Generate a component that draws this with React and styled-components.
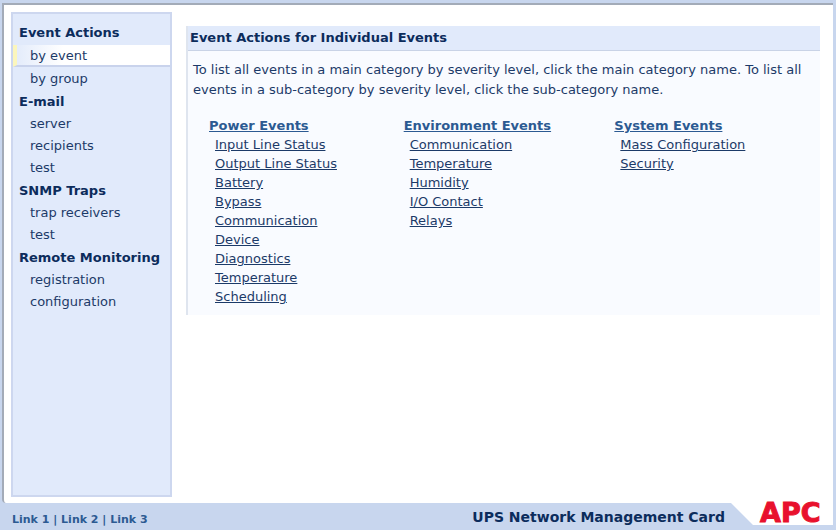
import React, { useState } from 'react';
import styled, { createGlobalStyle } from 'styled-components';

const navy = '#0c2c5c';
const textBlue = '#1c3a68';
const linkBlue = '#2c5a92';
const frameBlue = '#c8d6ee';
const panelBlue = '#e1eafb';

const GlobalStyle = createGlobalStyle`
    * {
        box-sizing: border-box;
    }
    body {
        margin: 0;
        font-family: Verdana, 'DejaVu Sans', sans-serif;
        font-size: 13px;
        color: ${textBlue};
        background: ${frameBlue};
    }
    a {
        color: inherit;
    }
`;

const Page = styled.div`
    min-height: 100vh;
    display: flex;
    flex-direction: column;
    padding: 3px 3px 0 2px;
`;

const Body = styled.div`
    flex: 1;
    display: flex;
    align-items: stretch;
    gap: 14px;
    padding: 7px 13px 6px 7px;
    background: #fff;
    border-top: 2px solid #a3abb8;
    border-left: 2px solid #a3abb8;
    border-bottom-left-radius: 4px;
`;

const Sidebar = styled.nav`
    flex: none;
    width: 161px;
    padding-top: 7px;
    background: ${panelBlue};
    border: 2px solid #cdd7ef;
`;

const NavTitle = styled.h2`
    margin: 0;
    padding-left: 6px;
    font-size: 13px;
    line-height: 23px;
    color: ${navy};
`;

const NavList = styled.ul`
    list-style: none;
    margin: 0;
    padding: 0;
`;

const NavItem = styled.li`
    height: 22px;
    margin: ${props => props.$active ? '1px 0' : '0'};
    background: ${props => props.$active ? 'linear-gradient(to right, #e4ecfb, #fff 30%)' : 'none'};
    border-bottom: ${props => props.$active ? '2px solid #c9d3ec' : 'none'};
    border-left: 4px solid ${props => props.$active ? '#fbf6bd' : 'transparent'};
    a {
        display: block;
        padding-left: 13px;
        line-height: 22px;
        text-decoration: none;
    }
`;

const Main = styled.main`
    flex: 1;
    min-width: 0;
    padding-top: 14px;
`;

const Panel = styled.section`
    padding-bottom: 9px;
    background: #f9fbff;
    border-left: 2px solid #dfe5ef;
`;

const PanelTitle = styled.h1`
    margin: 0;
    padding-left: 2px;
    font-size: 13px;
    line-height: 24px;
    color: ${navy};
    background: ${panelBlue};
    border-bottom: 1px solid #c9d3e6;
`;

const Intro = styled.p`
    margin: 0;
    padding: 9px 12px 17px 5px;
    line-height: 20px;
`;

const Columns = styled.div`
    display: grid;
    grid-template-columns: 195fr 211fr 206fr;
    padding-left: 21px;
`;

const Category = styled.h3`
    margin: 0;
    font-size: 13px;
    line-height: 18px;
    color: ${linkBlue};
`;

const EventList = styled.ul`
    list-style: none;
    margin: 0;
    padding: 0 0 0 6px;
    line-height: 19px;
`;

const Footer = styled.footer`
    display: flex;
    justify-content: space-between;
    align-items: stretch;
    height: 27px;
`;

const FooterLinks = styled.div`
    padding: 8px 0 0 10px;
    font-size: 11px;
    font-weight: bold;
    line-height: 17px;
    color: ${linkBlue};
    a {
        text-decoration: none;
    }
`;

const Brand = styled.div`
    display: flex;
`;

const Product = styled.div`
    padding-top: 3px;
    font-size: 14px;
    font-weight: bold;
    line-height: 22px;
    color: ${navy};
`;

const Logo = styled.svg`
    display: block;
    width: 108px;
    height: 27px;
    overflow: visible;
`;

const sections = [
    { title: 'Event Actions', items: ['by event', 'by group'] },
    { title: 'E-mail', items: ['server', 'recipients', 'test'] },
    { title: 'SNMP Traps', items: ['trap receivers', 'test'] },
    { title: 'Remote Monitoring', items: ['registration', 'configuration'] }
];

const categories = [
    {
        title: 'Power Events',
        events: ['Input Line Status', 'Output Line Status', 'Battery', 'Bypass', 'Communication', 'Device', 'Diagnostics', 'Temperature', 'Scheduling']
    },
    {
        title: 'Environment Events',
        events: ['Communication', 'Temperature', 'Humidity', 'I/O Contact', 'Relays']
    },
    { title: 'System Events', events: ['Mass Configuration', 'Security'] }
];

const App = () => {
    const [active, setActive] = useState('Event Actions/by event');

    return (
        <Page>
            <GlobalStyle />
            <Body>
                <Sidebar>
                    {sections.map(section =>
                        <div key={section.title}>
                            <NavTitle>{section.title}</NavTitle>
                            <NavList>
                                {section.items.map(item => {
                                    const id = `${section.title}/${item}`;
                                    return (
                                        <NavItem key={id} $active={id === active}>
                                            <a href="#" onClick={() => setActive(id)}>{item}</a>
                                        </NavItem>
                                    );
                                })}
                            </NavList>
                        </div>
                    )}
                </Sidebar>
                <Main>
                    <Panel>
                        <PanelTitle>Event Actions for Individual Events</PanelTitle>
                        <Intro>
                            To list all events in a main category by severity level, click the main category name. To list all events in a sub-category by severity level, click the sub-category name.
                        </Intro>
                        <Columns>
                            {categories.map(category =>
                                <div key={category.title}>
                                    <Category><a href="#">{category.title}</a></Category>
                                    <EventList>
                                        {category.events.map(event =>
                                            <li key={event}><a href="#">{event}</a></li>
                                        )}
                                    </EventList>
                                </div>
                            )}
                        </Columns>
                    </Panel>
                </Main>
            </Body>
            <Footer>
                <FooterLinks>
                    <a href="#">Link 1</a> | <a href="#">Link 2</a> | <a href="#">Link 3</a>
                </FooterLinks>
                <Brand>
                    <Product>UPS Network Management Card</Product>
                    <Logo viewBox="0 0 108 27" role="img" aria-label="APC">
                        <path d="M6 0 H108 V22 H28 Z" fill="#fff" />
                        <text x="35" y="19" fontFamily="'DejaVu Sans', sans-serif" fontWeight="bold" fontSize="27" fill="#e8112d" stroke="#e8112d" strokeWidth="1">APC</text>
                    </Logo>
                </Brand>
            </Footer>
        </Page>
    );
}

export default App;
